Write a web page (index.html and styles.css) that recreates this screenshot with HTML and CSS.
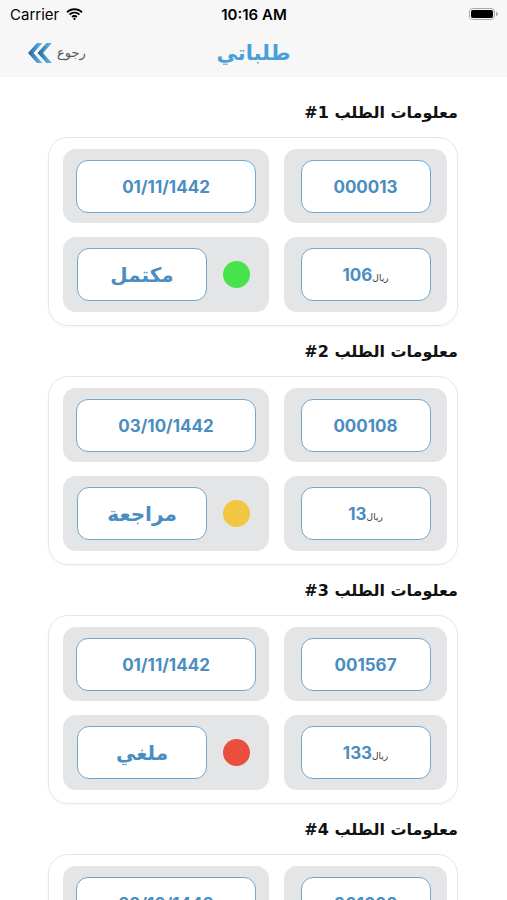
FILE: index.html
```html
<!DOCTYPE html>
<html lang="ar">

<head>
  <meta charset="UTF-8">
  <title>طلباتي</title>
  <link rel="stylesheet" href="styles.css">
</head>

<body>

  <!-- Status Bar -->
  <div class="statusbar">
    <div class="carrier">
      Carrier
      <svg class="wifi" width="17" height="12" viewBox="0 0 17 12">
        <path d="M8.5 2.2c2.6 0 5 1 6.8 2.7l1.3-1.3C14.5 1.5 11.6.3 8.5.3S2.5 1.5.4 3.6l1.3 1.3C3.5 3.2 5.9 2.2 8.5 2.2z" fill="#000" />
        <path d="M8.5 5.6c1.6 0 3.1.6 4.3 1.7l1.3-1.3C12.6 4.6 10.6 3.7 8.5 3.7S4.4 4.6 2.9 6l1.3 1.3c1.2-1.1 2.7-1.7 4.3-1.7z" fill="#000" />
        <path d="M8.5 9.1c.6 0 1.2.2 1.7.6l1.4-1.4c-.9-.8-2-1.2-3.1-1.2s-2.3.4-3.1 1.2l1.4 1.4c.5-.4 1.1-.6 1.7-.6z" fill="#000" />
        <circle cx="8.5" cy="10.9" r="1.1" fill="#000" />
      </svg>
    </div>
    <div class="clock">10:16 AM</div>
    <div class="battery">
      <span class="battery-body"><span class="battery-level"></span></span>
      <span class="battery-cap"></span>
    </div>
  </div>

  <!-- Navigation Bar -->
  <div class="navbar">
    <a class="back" href="#">
      <svg width="24" height="20" viewBox="0 0 24 20">
        <defs>
          <linearGradient id="chev" x1="0" y1="0" x2="1" y2="0">
            <stop offset="0" stop-color="#1f5f9e" />
            <stop offset="1" stop-color="#6cc0ec" />
          </linearGradient>
        </defs>
        <polygon points="9,0 14.5,0 5.5,10 14.5,20 9,20 0,10" fill="url(#chev)" />
        <polygon points="18.5,0 24,0 15,10 24,20 18.5,20 9.5,10" fill="url(#chev)" />
      </svg>
      <span>رجوع</span>
    </a>
    <div class="nav-title">طلباتي</div>
    <div></div>
  </div>

  <!-- Orders List -->
  <div id="orders" dir="rtl"></div>

  <script>
    const orders = document.getElementById("orders");

    const myOrders = [
      { number: "000013", date: "01/11/1442", price: 106, status: "مكتمل", color: "#47e34a" },
      { number: "000108", date: "03/10/1442", price: 13, status: "مراجعة", color: "#f2c641" },
      { number: "001567", date: "01/11/1442", price: 133, status: "ملغي", color: "#ea4f3d" },
      { number: "001602", date: "28/10/1442", price: 54, status: "ملغي", color: "#ea4f3d" }
    ];

    // Build a card for every order
    myOrders.forEach((order, i) => {
      const title = document.createElement("div");
      title.classList.add("order-title");
      title.innerHTML = `معلومات الطلب <span class="order-no">#${i + 1}</span>`;
      orders.appendChild(title);

      const card = document.createElement("div");
      card.classList.add("order-card");
      card.innerHTML = `
        <div class="cell"><div class="value">${order.number}</div></div>
        <div class="cell"><div class="value wide">${order.date}</div></div>
        <div class="cell"><div class="value"><span class="currency">ريال</span>${order.price}</div></div>
        <div class="cell status-cell">
          <span class="dot" style="background: ${order.color}"></span>
          <div class="value status">${order.status}</div>
        </div>`;
      orders.appendChild(card);
    });
  </script>

</body>

</html>
```

FILE: styles.css
```css
body {
  font-family: 'Inter', 'DejaVu Sans', sans-serif;
  background: white;
  margin: 0;
  padding: 0;
  color: black;
  overflow: hidden;
}

.statusbar {
  display: flex;
  justify-content: space-between;
  align-items: center;
  height: 28px;
  padding: 0 9px 0 10px;
  background: #f7f7f7;
  font-size: 15px;
}

.carrier {
  display: flex;
  align-items: center;
  gap: 7px;
  width: 90px;
}

.clock {
  font-weight: 600;
}

.battery {
  display: flex;
  align-items: center;
  justify-content: flex-end;
  width: 90px;
}

.battery-body {
  display: flex;
  width: 26px;
  height: 12px;
  padding: 1px;
  border: 1px solid #a9a9a9;
  border-radius: 4px;
  box-sizing: border-box;
}

.battery-level {
  flex: 1;
  background: black;
  border-radius: 2px;
}

.battery-cap {
  width: 2px;
  height: 4px;
  margin-left: 1px;
  background: #a9a9a9;
  border-radius: 0 2px 2px 0;
}

.navbar {
  display: grid;
  grid-template-columns: 1fr auto 1fr;
  align-items: center;
  height: 49px;
  background: #f7f7f7;
}

.back {
  display: flex;
  align-items: center;
  gap: 5px;
  padding-left: 28px;
  color: #555;
  font-family: 'DejaVu Sans', sans-serif;
  font-size: 13px;
  text-decoration: none;
}

.nav-title {
  font-family: 'DejaVu Sans', sans-serif;
  font-size: 21px;
  font-weight: bold;
  color: #4a9fd8;
}

#orders {
  padding: 10px 0 0;
}

.order-title {
  margin: 15px 49px 13px 0;
  font-family: 'DejaVu Sans', sans-serif;
  font-size: 16px;
  font-weight: bold;
  line-height: 22px;
  color: #111;
}

.order-no {
  direction: ltr;
  unicode-bidi: isolate;
}

.order-card {
  display: grid;
  grid-template-columns: 163px 206px;
  grid-template-rows: 74px 75px;
  gap: 14px 15px;
  margin: 0 49px 0 48px;
  padding: 11px 10px 13px 14px;
  border: 1px solid #e6e6e6;
  border-radius: 20px;
  box-shadow: 0 1px 3px rgba(0, 0, 0, 0.04);
}

.cell {
  display: flex;
  justify-content: center;
  align-items: center;
  background: #e4e5e6;
  border-radius: 13px;
}

.value {
  display: flex;
  justify-content: center;
  align-items: baseline;
  width: 130px;
  height: 53px;
  line-height: 52px;
  box-sizing: border-box;
  background: white;
  border: 1.5px solid #6ea8d3;
  border-radius: 12px;
  color: #4a8dc1;
  font-size: 17px;
  font-weight: 700;
}

.value.wide {
  width: 180px;
}

.currency {
  font-family: 'DejaVu Sans', sans-serif;
  font-size: 9px;
  font-weight: normal;
  color: #333;
}

.status-cell {
  justify-content: space-between;
  padding: 0 19px 0 14px;
}

.dot {
  width: 27px;
  height: 27px;
  border-radius: 50%;
}

.value.status {
  font-family: 'DejaVu Sans', sans-serif;
  font-size: 20px;
}
```
